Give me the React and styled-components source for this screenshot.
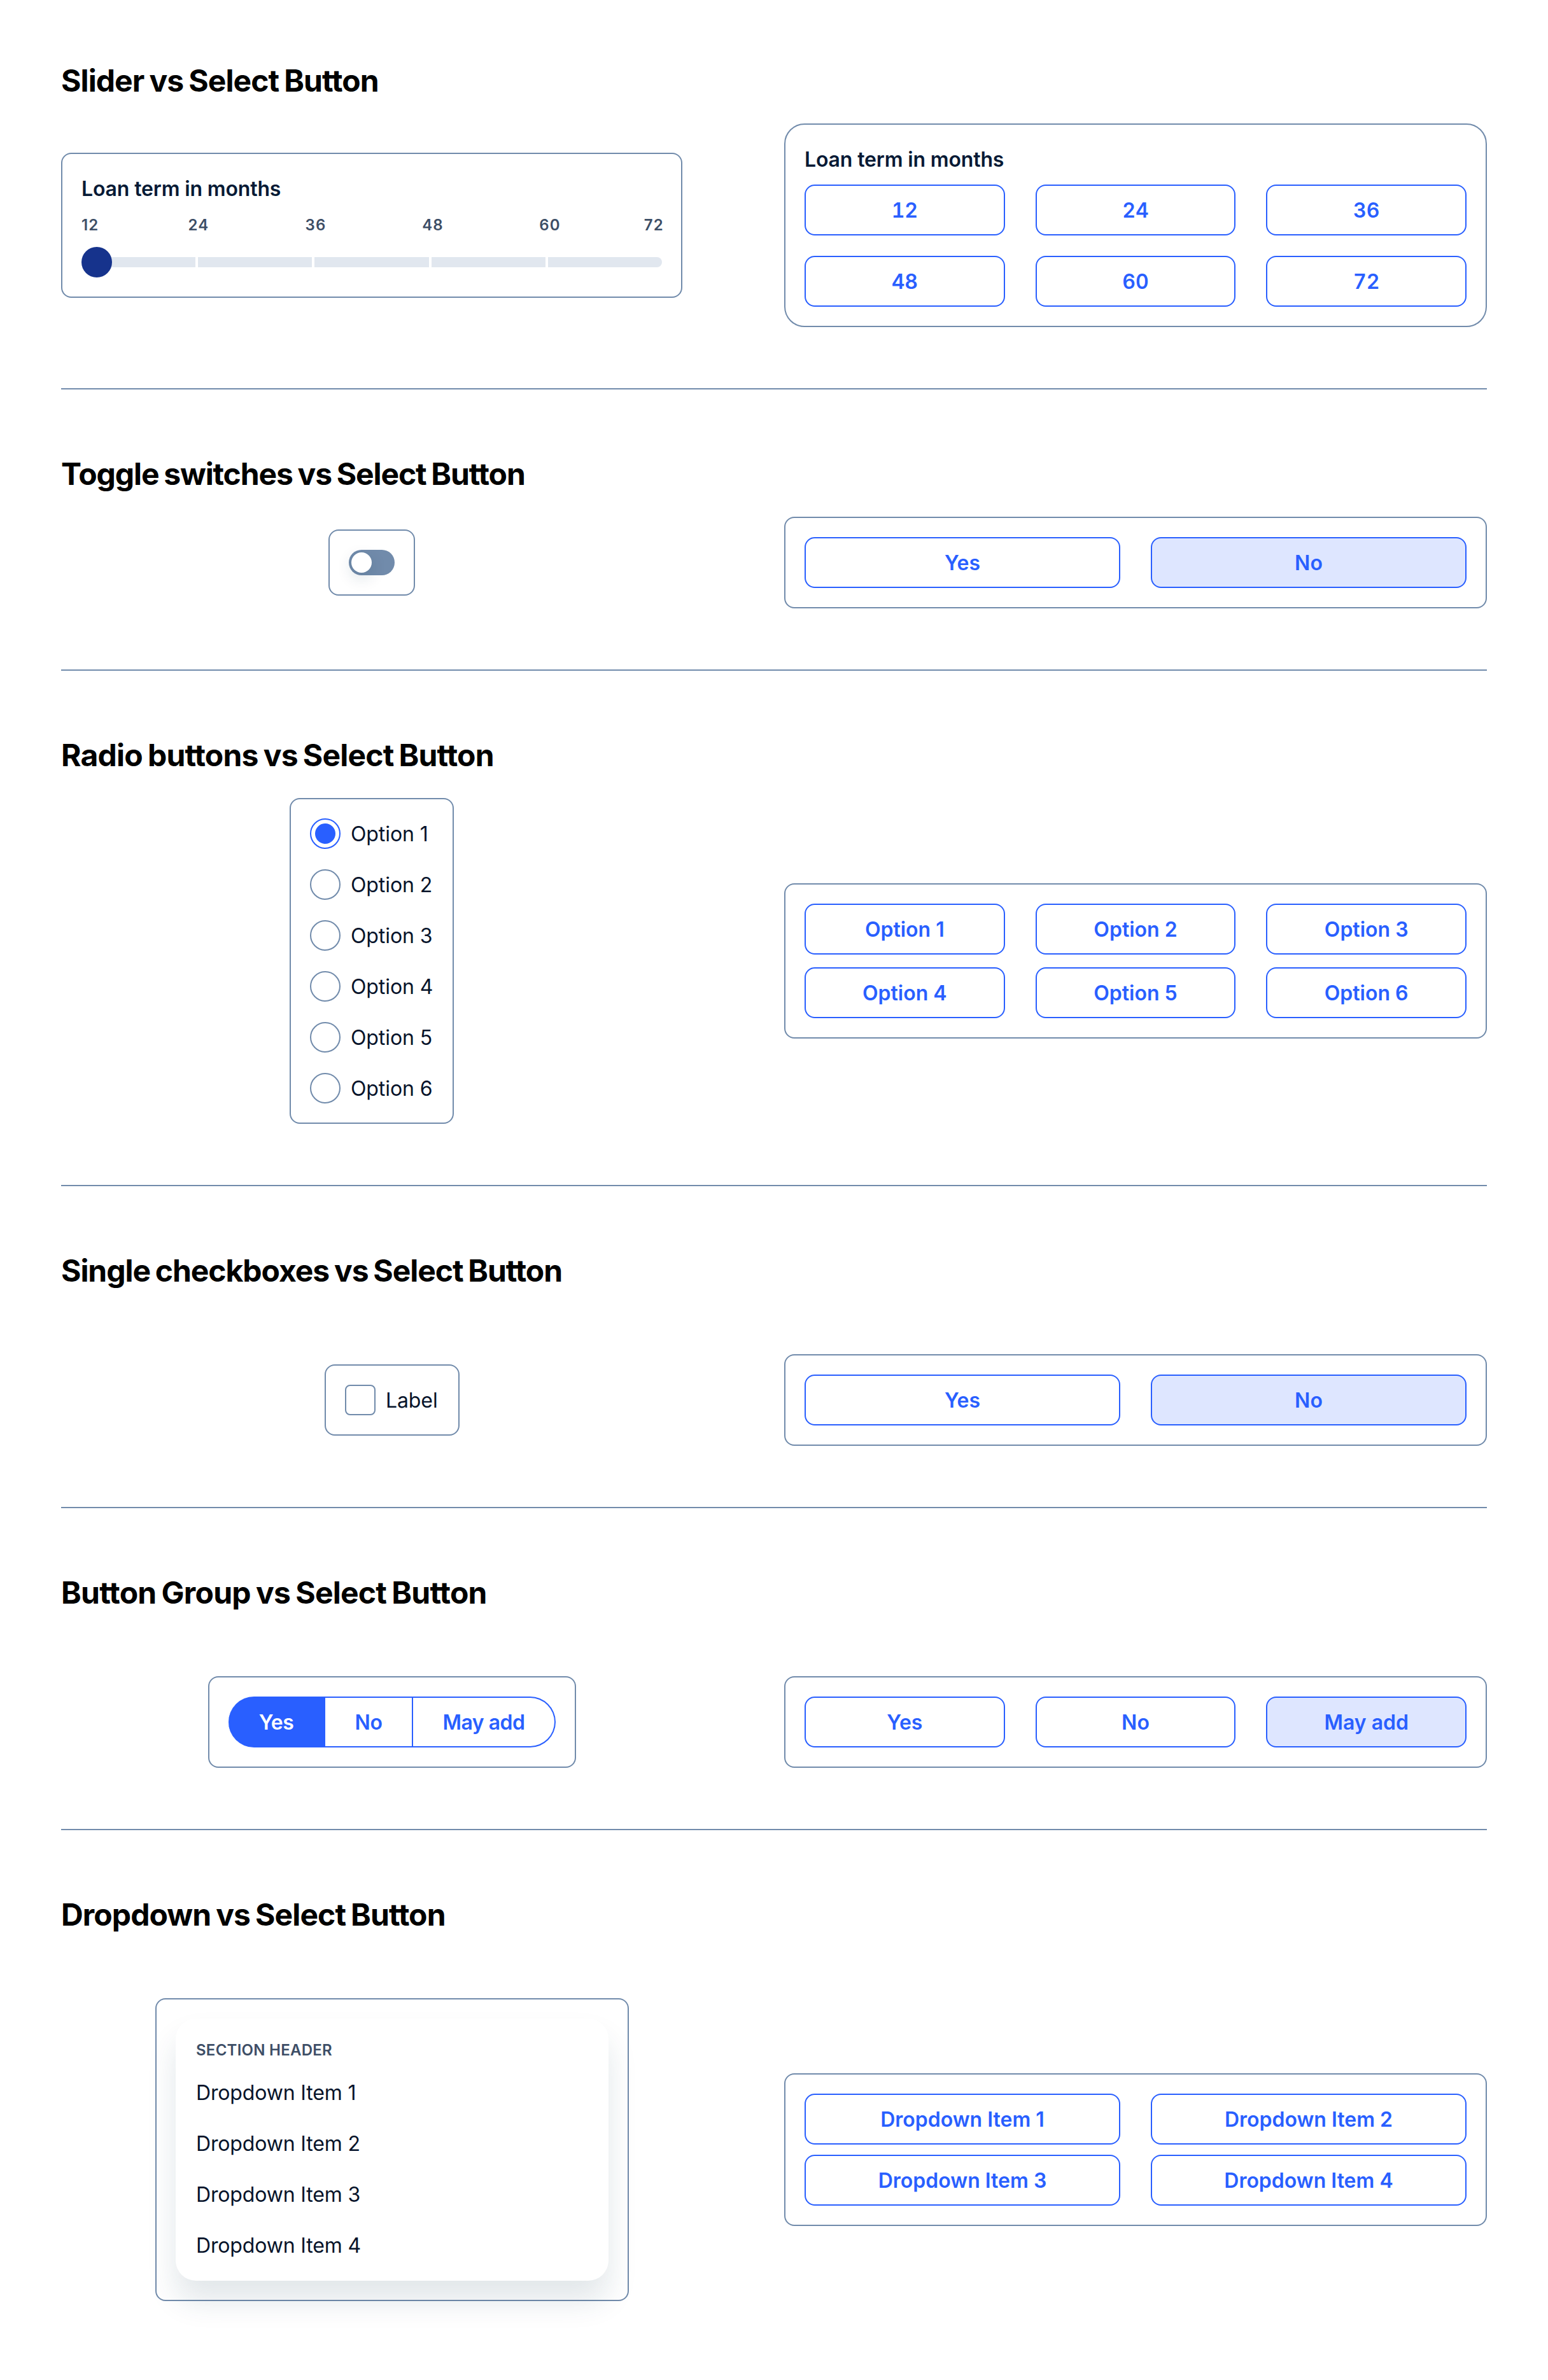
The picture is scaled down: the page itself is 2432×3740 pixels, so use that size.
import React from 'react';
import styled, { createGlobalStyle } from 'styled-components';

const colors = {
  primary: '#295fff',
  primaryDark: '#16338c',
  primaryLight: '#dee6ff',
  border: '#718bab',
  track: '#e1e7ef',
  text: '#071a35',
  item: '#06132a',
  muted: '#3d4e66',
};

const GlobalStyle = createGlobalStyle`
  *, *::before, *::after {
    box-sizing: border-box;
  }
  body {
    margin: 0;
    background: #fff;
    font-family: Inter, "Liberation Sans", sans-serif;
    -webkit-font-smoothing: antialiased;
  }
  button {
    margin: 0;
    padding: 0;
    font: inherit;
  }
`;

const Page = styled.main`
  width: 2432px;
  min-height: 3740px;
  padding: 90px 96px 0;
`;

const Section = styled.section`
  padding-bottom: 96px;

  & + & {
    border-top: 2px solid ${colors.border};
    padding-top: 96px;
  }
`;

const Title = styled.h2`
  height: 72px;
  margin: 0;
  font-size: 48px;
  font-weight: 700;
  line-height: 74px;
  letter-spacing: ${({ $tracking }) => $tracking || -0.9}px;
  word-spacing: -2.5px;
  color: #000;
`;

const Comparison = styled.div`
  display: grid;
  grid-template-columns: ${({ $left }) => $left || 976}px 1104px;
  justify-content: space-between;
  align-items: center;
  margin-top: ${({ $top }) => $top || 32}px;
`;

const Cell = styled.div`
  display: flex;
  justify-content: center;
`;

const Card = styled.div`
  width: ${({ $width }) => ($width ? `${$width}px` : '100%')};
  padding: 30px;
  border: 2px solid ${colors.border};
  border-radius: ${({ $radius }) => $radius || 16}px;
`;

const Label = styled.div`
  height: 48px;
  font-size: 32px;
  font-weight: 600;
  line-height: 50px;
  letter-spacing: -0.15px;
  color: ${colors.text};
`;

/* Select buttons */

const ButtonGrid = styled.div`
  display: grid;
  grid-template-columns: repeat(${({ $columns }) => $columns}, 1fr);
  gap: ${({ $rowGap }) => $rowGap || 0}px 48px;
  ${Label} + & {
    margin-top: 16px;
  }
`;

const SelectButton = styled.button`
  display: flex;
  justify-content: center;
  align-items: center;
  height: 80px;
  border: 2px solid ${colors.primary};
  border-radius: 16px;
  background: ${({ $selected }) => ($selected ? colors.primaryLight : '#fff')};
  color: ${colors.primary};
  font-size: 32px;
  font-weight: 600;
  font-feature-settings: ${({ $numeric }) => ($numeric ? '"tnum"' : 'normal')};
`;

/* Slider */

const Marks = styled.div`
  display: grid;
  grid-template-columns: 92px repeat(4, 184px) 1fr;
  margin: 16px 0;
  font-size: 24px;
  font-weight: 600;
  line-height: 36px;
  letter-spacing: 1.2px;
  text-align: center;
  color: ${colors.muted};

  span:first-child {
    text-align: left;
  }
  span:last-child {
    margin-right: -3px;
    text-align: right;
  }
`;

const Slider = styled.div`
  position: relative;
  height: 48px;
  padding: 16px 0;
`;

const Track = styled.div`
  display: flex;
  gap: 4px;
  height: 16px;
  border-radius: 8px;
  overflow: hidden;
`;

const Step = styled.div`
  flex: 1;
  background: ${colors.track};
`;

const Thumb = styled.div`
  position: absolute;
  left: 0;
  top: 0;
  width: 48px;
  height: 48px;
  border-radius: 50%;
  background: ${colors.primaryDark};
`;

/* Toggle switch */

const Toggle = styled.div`
  width: 72px;
  height: 40px;
  padding: 4px;
  border-radius: 20px;
  background: ${colors.border};
`;

const Knob = styled.div`
  width: 32px;
  height: 32px;
  border-radius: 50%;
  background: #fff;
  box-shadow: 0 8px 24px rgba(16, 56, 79, 0.16);
`;

/* Radio buttons and checkbox */

const OptionList = styled.div`
  display: grid;
  gap: 32px;
`;

const Option = styled.div`
  display: flex;
  align-items: center;
  gap: 16px;
  height: 48px;
  font-size: 32px;
  letter-spacing: -0.1px;
  white-space: nowrap;
  color: ${colors.item};
`;

const Radio = styled.span`
  display: flex;
  flex-shrink: 0;
  justify-content: center;
  align-items: center;
  width: 48px;
  height: 48px;
  border: 2px solid ${({ $checked }) => ($checked ? colors.primary : colors.border)};
  border-radius: 50%;

  &::after {
    content: "";
    width: 32px;
    height: 32px;
    border-radius: 50%;
    background: ${({ $checked }) => ($checked ? colors.primary : 'transparent')};
  }
`;

const Checkbox = styled.span`
  flex-shrink: 0;
  width: 48px;
  height: 48px;
  border: 2px solid ${colors.border};
  border-radius: 8px;
`;

/* Button group */

const Group = styled.div`
  display: grid;
  grid-template-columns: 152px 138px 1fr;
  height: 80px;
`;

const GroupButton = styled.button`
  border: 2px solid ${colors.primary};
  border-left-width: 0;
  background: ${({ $active }) => ($active ? colors.primary : '#fff')};
  color: ${({ $active }) => ($active ? '#fff' : colors.primary)};
  font-size: 32px;
  font-weight: 600;
  letter-spacing: -0.5px;

  &:first-child {
    border-radius: 40px 0 0 40px;
  }
  &:last-child {
    border-radius: 0 40px 40px 0;
  }
`;

/* Dropdown */

const Menu = styled.div`
  padding: 16px 0;
  border-radius: 32px;
  background: #fff;
  box-shadow: 0 32px 48px rgba(16, 56, 79, 0.12);
`;

const MenuHeader = styled.div`
  height: 60px;
  padding: 16px 32px 0;
  font-size: 24px;
  font-weight: 600;
  line-height: 36px;
  letter-spacing: 0.25px;
  text-transform: uppercase;
  color: ${colors.muted};
`;

const MenuItem = styled.div`
  padding: 17px 32px 15px;
  font-size: 32px;
  line-height: 48px;
  letter-spacing: -0.15px;
  color: ${colors.item};
`;

const months = [12, 24, 36, 48, 60, 72];
const options = ['Option 1', 'Option 2', 'Option 3', 'Option 4', 'Option 5', 'Option 6'];
const menuItems = ['Dropdown Item 1', 'Dropdown Item 2', 'Dropdown Item 3', 'Dropdown Item 4'];

function SelectButtons({ items, columns, rowGap, selected, numeric }) {
  return (
    <ButtonGrid $columns={columns} $rowGap={rowGap}>
      {items.map((item) => (
        <SelectButton key={item} type="button" $selected={item === selected} $numeric={numeric}>
          {item}
        </SelectButton>
      ))}
    </ButtonGrid>
  );
}

function App() {
  return (
    <Page>
      <GlobalStyle />
      <Section>
        <Title>Slider vs Select Button</Title>
        <Comparison>
          <Card>
            <Label>Loan term in months</Label>
            <Marks>
              {months.map((month) => (
                <span key={month}>{month}</span>
              ))}
            </Marks>
            <Slider>
              <Track>
                {months.slice(1).map((month) => (
                  <Step key={month} />
                ))}
              </Track>
              <Thumb />
            </Slider>
          </Card>
          <Card $radius={32}>
            <Label>Loan term in months</Label>
            <SelectButtons items={months} columns={3} rowGap={32} numeric />
          </Card>
        </Comparison>
      </Section>

      <Section>
        <Title $tracking={-1.1}>Toggle switches vs Select Button</Title>
        <Comparison>
          <Cell>
            <Card $width={136}>
              <Toggle>
                <Knob />
              </Toggle>
            </Card>
          </Cell>
          <Card>
            <SelectButtons items={['Yes', 'No']} columns={2} selected="No" />
          </Card>
        </Comparison>
      </Section>

      <Section>
        <Title $tracking={-0.8}>Radio buttons vs Select Button</Title>
        <Comparison>
          <Cell>
            <Card $width={258}>
              <OptionList>
                {options.map((option, index) => (
                  <Option key={option}>
                    <Radio $checked={index === 0} />
                    {option}
                  </Option>
                ))}
              </OptionList>
            </Card>
          </Cell>
          <Card>
            <SelectButtons items={options} columns={3} rowGap={20} />
          </Card>
        </Comparison>
      </Section>

      <Section>
        <Title $tracking={-1.05}>Single checkboxes vs Select Button</Title>
        <Comparison $left={1040} $top={96}>
          <Cell>
            <Card $width={212}>
              <Option>
                <Checkbox />
                Label
              </Option>
            </Card>
          </Cell>
          <Card>
            <SelectButtons items={['Yes', 'No']} columns={2} selected="No" />
          </Card>
        </Comparison>
      </Section>

      <Section>
        <Title $tracking={-0.75}>Button Group vs Select Button</Title>
        <Comparison $left={1040} $top={96}>
          <Cell>
            <Card $width={578}>
              <Group>
                <GroupButton type="button" $active>Yes</GroupButton>
                <GroupButton type="button">No</GroupButton>
                <GroupButton type="button">May add</GroupButton>
              </Group>
            </Card>
          </Cell>
          <Card>
            <SelectButtons items={['Yes', 'No', 'May add']} columns={3} selected="May add" />
          </Card>
        </Comparison>
      </Section>

      <Section>
        <Title>Dropdown vs Select Button</Title>
        <Comparison $left={1040} $top={96}>
          <Cell>
            <Card $width={744}>
              <Menu>
                <MenuHeader>Section header</MenuHeader>
                {menuItems.map((item) => (
                  <MenuItem key={item}>{item}</MenuItem>
                ))}
              </Menu>
            </Card>
          </Cell>
          <Card>
            <SelectButtons items={menuItems} columns={2} rowGap={16} />
          </Card>
        </Comparison>
      </Section>
    </Page>
  );
}

export default App;
